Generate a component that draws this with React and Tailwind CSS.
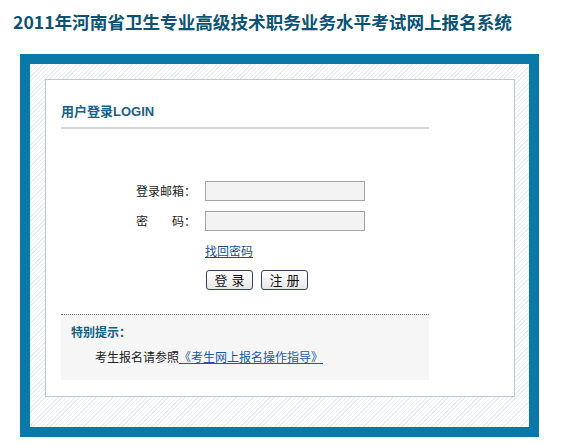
export default function App() {
  return (
    <div className="w-[562px] h-[445px] bg-white font-['Noto_Sans_CJK_SC',sans-serif] text-[12px] text-[#222]">
      {/* page heading */}
      <div className="pl-[13px] pt-[11px] h-[54px]">
        <h1 className="text-[17.6px] leading-[22px] font-bold text-[#0c5273]">
          2011年河南省卫生专业高级技术职务业务水平考试网上报名系统
        </h1>
      </div>

      {/* outer blue frame */}
      <div className="ml-[20px] w-[519px] h-[383px] border-[10px] border-[#0b79a8] bg-[repeating-linear-gradient(135deg,#e7f0f6_0px,#e7f0f6_1px,#ffffff_1px,#ffffff_3px)] p-[15px]">
        <div className="w-[470px] h-[318px] bg-white border border-[#b9cbd6] pl-[15px] pt-[23px]">
          <div className="w-[368px]">
            <h2 className="h-[24px] leading-[18px] text-[13px] font-bold text-[#17618a] border-b-2 border-[#d6d6d6] box-content font-['Liberation_Sans','Noto_Sans_CJK_SC',sans-serif]">
              用户登录LOGIN
            </h2>

            {/* login form */}
            <div className="mt-[52px] flex flex-col gap-[10px]">
              <div className="flex items-center">
                <label className="w-[69px] ml-[75px]">登录邮箱：</label>
                <input type="text" className="w-[160px] h-[20px] bg-[#f3f3f3] border border-[#a3a3a3] outline-none" />
              </div>
              <div className="flex items-center">
                <label className="w-[69px] ml-[75px] flex">
                  <span>密</span>
                  <span className="ml-[24px]">码：</span>
                </label>
                <input type="password" className="w-[160px] h-[20px] bg-[#f3f3f3] border border-[#a3a3a3] outline-none" />
              </div>
            </div>
            <div className="ml-[144px] mt-[12px] leading-[16px]">
              <a href="#" className="text-[#1b4f8b] underline">找回密码</a>
            </div>
            <div className="ml-[145px] mt-[11px] flex gap-[8px]">
              <button className="w-[47px] h-[20px] rounded-[3px] border border-[#33465c] bg-[linear-gradient(#ffffff,#e6e6e6)] text-[13px] leading-[16px] tracking-[4px] pl-[4px] text-[#111]">
                登录
              </button>
              <button className="w-[47px] h-[20px] rounded-[3px] border border-[#33465c] bg-[linear-gradient(#ffffff,#e6e6e6)] text-[13px] leading-[16px] tracking-[4px] pl-[4px] text-[#111]">
                注册
              </button>
            </div>

            {/* notice */}
            <div className="mt-[24px] border-t border-dotted border-[#777] bg-[#f6f6f6] h-[66px] pl-[10px] pt-[9px]">
              <p className="font-bold text-[#14607f] leading-[16px]">特别提示：</p>
              <p className="mt-[9px] ml-[24px] leading-[16px]">
                考生报名请参照<a href="#" className="text-[#1b59a8] underline">《考生网上报名操作指导》</a>
              </p>
            </div>
          </div>
        </div>
      </div>
    </div>
  );
}
